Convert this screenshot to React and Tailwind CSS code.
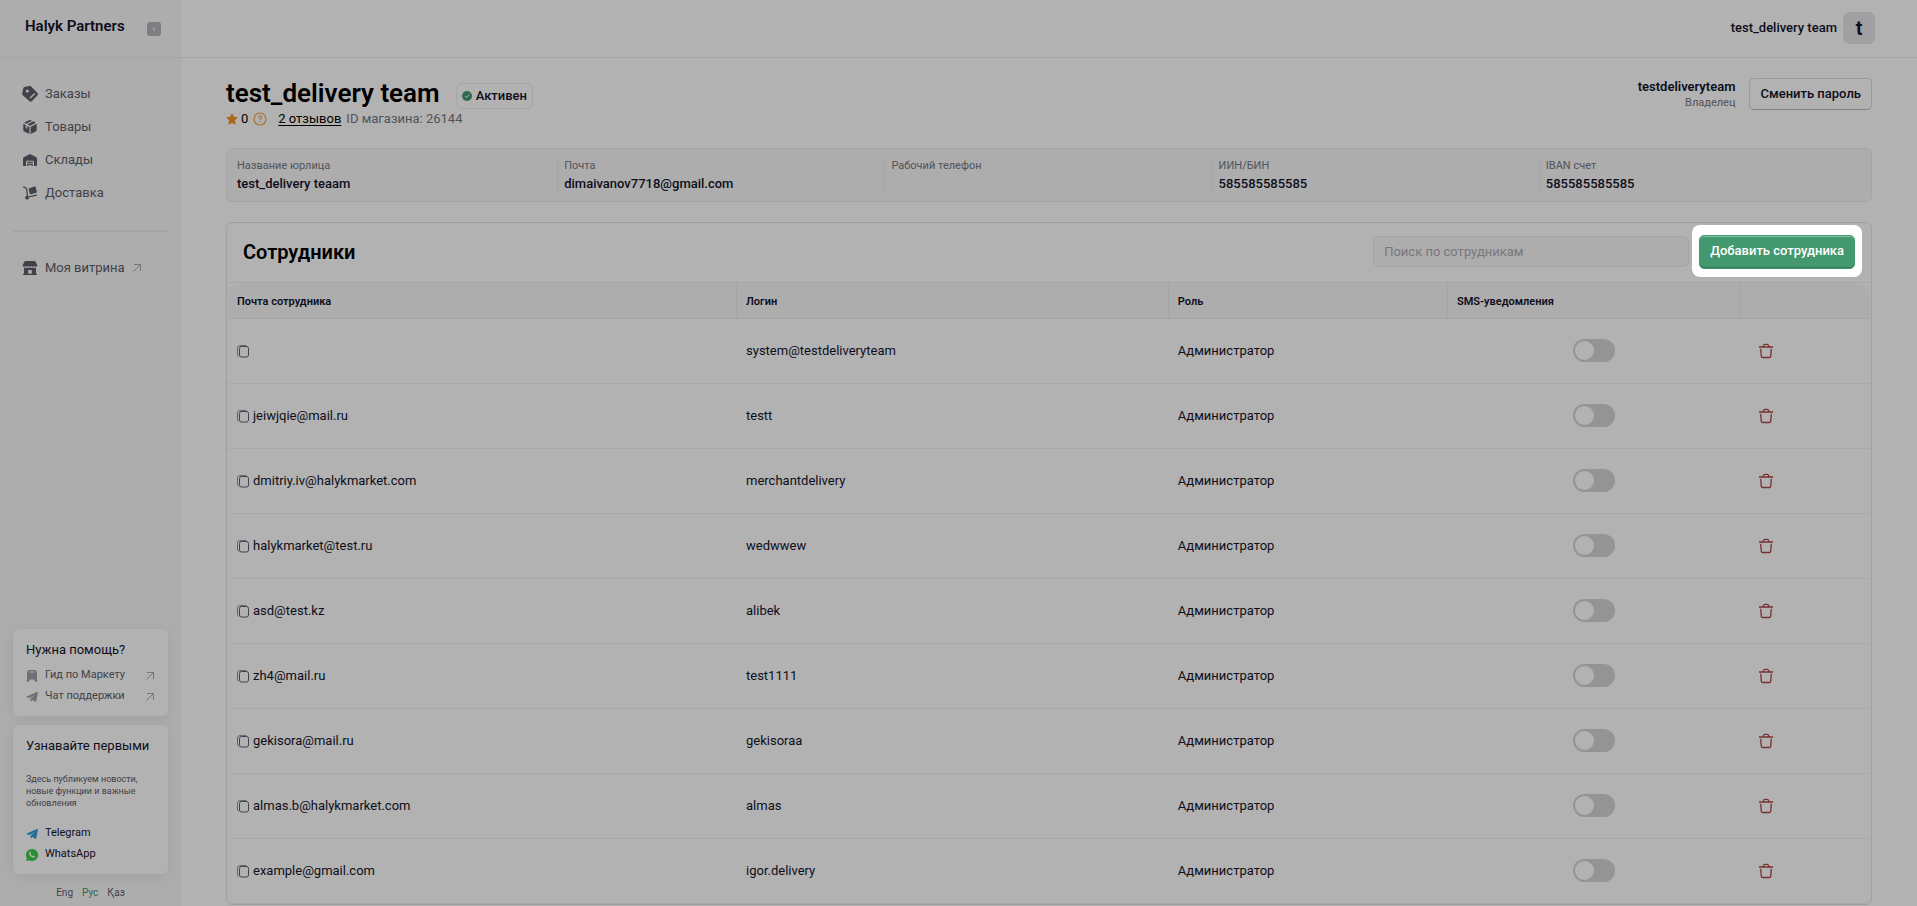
import React from "react";

const navItems = [
  { label: "Заказы", icon: TagIcon },
  { label: "Товары", icon: BoxIcon },
  { label: "Склады", icon: WarehouseIcon },
  { label: "Доставка", icon: CartIcon },
];

const details = [
  ["Название юрлица", "test_delivery teaam"],
  ["Почта", "dimaivanov7718@gmail.com"],
  ["Рабочий телефон", ""],
  ["ИИН/БИН", "585585585585"],
  ["IBAN счет", "585585585585"],
];

const employees = [
  ["", "system@testdeliveryteam"],
  ["jeiwjqie@mail.ru", "testt"],
  ["dmitriy.iv@halykmarket.com", "merchantdelivery"],
  ["halykmarket@test.ru", "wedwwew"],
  ["asd@test.kz", "alibek"],
  ["zh4@mail.ru", "test1111"],
  ["gekisora@mail.ru", "gekisoraa"],
  ["almas.b@halykmarket.com", "almas"],
  ["example@gmail.com", "igor.delivery"],
];

function TagIcon() {
  return (
    <svg viewBox="0 0 16 16" className="size-4" fill="currentColor" aria-hidden="true">
      <path fillRule="evenodd" d="M3.300.8 7.600.1c.7-.1 1.300.1 1.800.6l5.900 6c.8.8.8 2 0 2.800l-5.200 5.600c-.8.8-2 .8-2.800 0L.8 9.200C.3 8.700.1 8 .2 7.300l1-4.700C1.400 1.600 2.200.9 3.300.8ZM5.300 3.400a1.600 1.600 0 1 0 0 3.200 1.600 1.600 0 0 0 0-3.200Zm7 3.700-4.900 4.700 1 1 4.900-4.700-1-1Z" />
    </svg>
  );
}

function BoxIcon() {
  return (
    <svg viewBox="0 0 16 16" className="size-4" fill="currentColor" aria-hidden="true">
      <path d="m8 .8 2 1-5.600 3L2 3.700 8 .8ZM11.200 2.300 14 3.700 8 6.800 5.600 5.500l5.600-3.200ZM1.300 4.800 3.700 6v3l1.500.8V6.900l2.200 1.100v7L2.200 12.600a1.600 1.600 0 0 1-.9-1.500V4.800ZM8.600 8l6.100-3.200v6.300c0 .6-.3 1.200-.9 1.500L8.600 15V8Z" />
    </svg>
  );
}

function WarehouseIcon() {
  return (
    <svg viewBox="0 0 16 16" className="size-4" fill="currentColor" aria-hidden="true">
      <path fillRule="evenodd" d="M1 7.200c0-.9.400-1.700 1.200-2.100L7 2.500c.6-.3 1.400-.3 2 0l4.800 2.600c.8.400 1.200 1.200 1.200 2.100v5.800c0 .6-.4 1-1 1h-2V10c0-.8-.5-1.300-1.300-1.300H5.300C4.500 8.700 4 9.200 4 10v4H2c-.6 0-1-.4-1-1V7.200ZM5.200 9.700h5.600v1.200H5.200zM5.200 11.700h5.600V14H9.500v-1.100h-3V14H5.200Z" />
    </svg>
  );
}

function CartIcon() {
  return (
    <svg viewBox="0 0 16 16" className="size-4" fill="currentColor" aria-hidden="true">
      <path d="m7.300 3.200 5.100-1.700c.5-.2 1 .1 1.200.6l1.200 4.500c.1.500-.1 1-.6 1.200L9 9.300c-.5.100-1-.1-1.200-.6L6.600 4.300c-.1-.5.200-1 .7-1.100Z" />
      <path d="M1.500 2.200c2 0 2.800.7 3.100 2.200l.9 6.300" stroke="currentColor" strokeWidth="1.200" fill="none" strokeLinecap="round" />
      <path d="m6.500 12 8-1.900" stroke="currentColor" strokeWidth="1.200" strokeLinecap="round" />
      <circle cx="5" cy="12.700" r="1.900" />
    </svg>
  );
}

function StoreIcon() {
  return (
    <svg viewBox="0 0 16 16" className="size-4" fill="currentColor" aria-hidden="true">
      <path d="M3.600 1h8.800c.6 0 1.100.3 1.400.9L15.200 5c.3 1-.3 1.800-1.200 1.800-.8 0-1.400-.5-1.500-1-.1.500-.8 1-1.500 1s-1.400-.5-1.500-1c-.1.500-.8 1-1.500 1s-1.400-.5-1.500-1c-.1.500-.8 1-1.500 1s-1.400-.5-1.500-1c-.1.500-.7 1-1.500 1C1.100 6.800.5 6 .8 5l1.400-3.100c.3-.6.800-.9 1.400-.9Z" />
      <path fillRule="evenodd" d="M2 7.800h12v6h1V15H1v-1.200h1v-6Zm4.200 6h3.600V10H6.200v3.800Z" />
    </svg>
  );
}

function ArrowIcon({ className }) {
  return (
    <svg viewBox="0 0 10 10" className={className} fill="none" stroke="currentColor" aria-hidden="true">
      <path d="M1.500 8.500 8.500 1.500M2 1.500h6.500v6.500" />
    </svg>
  );
}

function GuideIcon() {
  return (
    <svg viewBox="0 0 12 12" className="size-3" fill="currentColor" aria-hidden="true">
      <path fillRule="evenodd" d="M3.500 0h5A2.500 2.500 0 0 1 11 2.500v9c0 .4-.4.600-.7.400L6.600 9.200a1 1 0 0 0-1.200 0L1.700 11.900c-.3.200-.7 0-.7-.4v-9A2.500 2.500 0 0 1 3.500 0Zm0 1.600v.8h5v-.8Z" />
    </svg>
  );
}

function PlaneIcon() {
  return (
    <svg viewBox="0 0 12 12" className="size-3" fill="currentColor" aria-hidden="true">
      <path d="M.7 5.400 11 1.100c.5-.2 1 .2.900.7l-1.700 8.500c-.1.600-.7.800-1.100.5L6.400 9 5.200 10.200c-.2.300-.7.100-.7-.3V7.700L8.800 4 3.700 7.100.8 6.300c-.5-.1-.5-.7-.1-.9Z" />
    </svg>
  );
}

function WhatsAppIcon() {
  return (
    <svg viewBox="0 0 12 12" className="size-3" aria-hidden="true">
      <path fill="#3dcc4d" d="M6 0a6 6 0 1 1-2.700 11.300L.2 12l.6-3A6 6 0 0 1 6 0Z" />
      <path fill="#fff" d="M4 2.900c.3-.1.500 0 .6.300l.4 1c.1.300-.5.700-.4.900.4.900 1.100 1.500 2 1.900.3.100.6-.7.900-.6l1.100.5c.3.200.3.400.2.700-.3.900-1.200 1.100-2 .9-1.700-.4-3.200-1.800-3.700-3.400-.2-.9.100-1.900.9-2.200Z" />
    </svg>
  );
}

function CopyIcon() {
  return (
    <svg viewBox="0 0 12 13" className="h-[13px] w-3" fill="none" stroke="currentColor" aria-hidden="true">
      <rect x="2.500" y="1.500" width="9" height="10.500" rx="2" />
      <path d="M9.500.6H3C1.500.6.5 1.600.5 3v6.500c0 .9.400 1.500 1.200 2" strokeOpacity="0.700" />
    </svg>
  );
}

function TrashIcon() {
  return (
    <svg viewBox="0 0 14 16" className="h-4 w-[14px]" fill="none" stroke="currentColor" strokeWidth="1.300" strokeLinejoin="round" aria-hidden="true">
      <path d="M0 4h14M4 3.800C4.300 2 4.700 1.400 5.800 1.400h2.400c1.100 0 1.500.6 1.800 2.400M1.700 5.800l.6 7.500c.1.800.5 1.200 1.300 1.200h6.800c.8 0 1.200-.4 1.300-1.200l.6-7.500" />
    </svg>
  );
}

function Sidebar() {
  return (
    <aside className="flex w-[181px] shrink-0 flex-col bg-[#f8f8f8]">
      <div className="flex h-[58px] items-center justify-between border-b border-[#ececee] pr-5 pl-[25px]">
        <a href="#home" className="pb-1 text-[15px] font-semibold text-[#14142b]">Halyk Partners</a>
        <button type="button" aria-label="Свернуть меню" className="flex size-[14px] items-center justify-center rounded-[3px] bg-[#b4b4bb] text-white">
          <svg viewBox="0 0 8 8" className="size-2" fill="none" stroke="currentColor" aria-hidden="true"><path d="M5 2 3 4l2 2" /></svg>
        </button>
      </div>
      <nav className="px-[13px] text-[13px] text-[#5d5d6b]">
        <ul className="flex flex-col gap-[13px] pt-[26px] pb-[27px]">
          {navItems.map(({ label, icon: Icon }) => (
            <li key={label}>
              <a href="#section" className="flex h-5 items-center gap-[7px] pl-[9px]"><Icon />{label}</a>
            </li>
          ))}
        </ul>
        <div className="border-t-2 border-[#ececee] pt-[26px]">
          <a href="#store" className="flex h-5 items-center gap-[7px] pl-[9px]">
            <StoreIcon />Моя витрина<ArrowIcon className="size-[10px] text-[#a6a6ad]" />
          </a>
        </div>
      </nav>
      <div className="mt-auto flex flex-col gap-[9px] px-[13px]">
        <section className="flex h-[87px] flex-col rounded-md bg-white px-[13px] pt-[11px] shadow-[0_2px_16px_rgba(0,0,0,0.08)]">
          <h2 className="text-[13px] leading-5 text-[#14142b]">Нужна помощь?</h2>
          <a href="#guide" className="mt-[5px] flex h-[21px] items-center gap-[7px] text-[11px] text-[#5d5d6b]">
            <span className="text-[#a0a0a8]"><GuideIcon /></span>Гид по Маркету<ArrowIcon className="ml-auto size-[10px] text-[#a6a6ad]" />
          </a>
          <a href="#chat" className="flex h-[21px] items-center gap-[7px] text-[11px] text-[#5d5d6b]">
            <span className="text-[#a0a0a8]"><PlaneIcon /></span>Чат поддержки<ArrowIcon className="ml-auto size-[10px] text-[#a6a6ad]" />
          </a>
        </section>
        <section className="flex h-[149px] flex-col rounded-md bg-white px-[13px] pt-[11px] shadow-[0_2px_16px_rgba(0,0,0,0.08)]">
          <h2 className="text-[13px] leading-5 whitespace-nowrap text-[#14142b]">Узнавайте первыми</h2>
          <p className="mt-[17px] text-[9px] leading-[12px] text-[#5d5d6b]">Здесь публикуем новости, новые функции и важные обновления</p>
          <a href="#telegram" className="mt-[14px] flex h-[21px] shrink-0 items-center gap-[7px] text-[11px] text-[#14142b]">
            <span className="text-[#2e9fdb]"><PlaneIcon /></span>Telegram
          </a>
          <a href="#whatsapp" className="flex h-[21px] shrink-0 items-center gap-[7px] text-[11px] text-[#14142b]"><WhatsAppIcon />WhatsApp</a>
        </section>
      </div>
      <div className="flex h-8 items-center justify-center gap-[9px] pt-[5px] text-[10px] text-[#5d5d6b]">
        <a href="#en">Eng</a>
        <a href="#ru" className="text-[#43986f]">Рус</a>
        <a href="#kz">Қаз</a>
      </div>
    </aside>
  );
}

function EmployeeTable() {
  const th = "border-r border-[#ececee] px-[9px] pt-[2px] text-left font-semibold first:rounded-tl-xl last:rounded-tr-xl last:border-r-0";
  return (
    <div className="px-px pt-px">
      <table className="w-full table-fixed border-separate border-spacing-0 text-[#14142b]">
        <colgroup>
          <col className="w-[31%]" />
          <col className="w-[26.300%]" />
          <col className="w-[17%]" />
          <col className="w-[17.800%]" />
          <col />
        </colgroup>
        <thead>
          <tr className="h-[35px] text-[11px] [&>th]:border-b [&>th]:bg-[#f8f8f8]">
            <th className={th}>Почта сотрудника</th>
            <th className={th}>Логин</th>
            <th className={th}>Роль</th>
            <th className={th}>SMS-уведомления</th>
            <th className={th} aria-label="Действия"></th>
          </tr>
        </thead>
        <tbody>
          {employees.map(([mail, login]) => (
            <tr key={login} className="h-[65px] text-[13px] [&>td]:border-b [&>td]:border-[#f3f3f5] [&>td]:px-[9px]">
              <td>
                <div className="flex items-center gap-1">
                  <button type="button" aria-label="Скопировать почту" className="text-[#5d5d6b]"><CopyIcon /></button>
                  {mail}
                </div>
              </td>
              <td>{login}</td>
              <td>Администратор</td>
              <td className="pb-px">
                <label className="relative mx-auto block h-[23px] w-[42px]">
                  <input type="checkbox" aria-label={"SMS-уведомления " + login} className="peer block h-full w-full appearance-none rounded-full bg-[#d5d5d8] checked:bg-[#43986f]" />
                  <span className="absolute top-[2px] left-[2px] size-[19px] rounded-full bg-white peer-checked:left-[21px]"></span>
                </label>
              </td>
              <td className="pb-px">
                <button type="button" aria-label={"Удалить " + login} className="ml-[10px] block text-[#ab4545]"><TrashIcon /></button>
              </td>
            </tr>
          ))}
        </tbody>
      </table>
    </div>
  );
}

export default function App() {
  return (
    <div className="flex min-h-screen bg-white font-['Roboto','Liberation_Sans',sans-serif] text-[#14142b]">
      <Sidebar />
      <div className="flex min-w-0 flex-1 flex-col">
        <header className="flex h-[58px] items-center justify-end gap-[6px] border-b border-[#ececee] pr-[42px] pb-px">
          <span className="text-[13px] font-medium">test_delivery team</span>
          <span className="flex size-8 items-center justify-center rounded-md bg-[#e5e5ea] text-xl font-semibold">t</span>
        </header>
        <main className="px-[45px]">
          <div className="flex h-[90px] justify-between pt-[19px]">
            <div>
              <div className="flex items-center gap-4">
                <h1 className="text-[26px] leading-8 font-semibold text-black">test_delivery team</h1>
                <span className="mt-[6px] flex h-[26px] items-center gap-1 rounded-md border border-[#ececee] px-[5px] text-[13px] font-medium">
                  <svg viewBox="0 0 10 10" className="size-[10px]" aria-hidden="true"><circle cx="5" cy="5" r="5" fill="#43986f" /><path d="m3 5 1.500 1.500L7.200 3.700" stroke="#fff" fill="none" /></svg>
                  Активен
                </span>
              </div>
              <div className="flex h-5 items-center text-[13px]">
                <svg viewBox="0 0 12 12" className="mr-[3px] size-3" fill="#f79420" stroke="#f79420" strokeLinejoin="round" aria-hidden="true"><path d="m6 1 1.500 3.200 3.500.4-2.500 2.600.6 3.800L6 9.400 2.900 11l.6-3.800L1 4.600l3.500-.4Z" /></svg>
                <span className="mr-[5px] text-black">0</span>
                <svg viewBox="0 0 14 14" className="mr-[11px] size-[14px]" fill="none" stroke="#f9a648" strokeWidth="1.200" aria-hidden="true"><circle cx="7" cy="7" r="6" /><path d="M5.500 5.600c.1-2 3.100-1.900 3 0C8.500 6.700 7 6.800 7 8M7 9v1.300" /></svg>
                <a href="#reviews" className="mr-[5px] text-black underline underline-offset-2">2 отзывов</a>
                <span className="text-[#77777f]">ID магазина: 26144</span>
              </div>
            </div>
            <div className="flex items-start gap-[14px]">
              <div className="pt-px text-right">
                <p className="text-[13px] leading-[18px] font-semibold">testdeliveryteam</p>
                <p className="text-[11px] leading-[14px] text-[#77777f]">Владелец</p>
              </div>
              <button type="button" className="mt-px h-8 rounded-[5px] border border-[#dcdce0] border-b-[#b9b9be] px-[10px] pb-px text-[13px] font-medium">Сменить пароль</button>
            </div>
          </div>
          <dl className="grid h-[54px] grid-cols-5 rounded-md border border-[#ececee] bg-[#f8f8f8] px-1 py-[9px]">
            {details.map(([name, value]) => (
              <div key={name} className="border-r border-[#ececee] pl-[6px] last:border-r-0">
                <dt className="text-[11px] leading-4 text-[#77777f]">{name}</dt>
                <dd className="text-[13px] leading-5 font-medium">{value}</dd>
              </div>
            ))}
          </dl>
          <section className="mt-5 rounded-md border border-[#e6e6e9]">
            <div className="flex h-[60px] items-center justify-between border-b border-[#ececee] px-4 pb-[2px]">
              <h2 className="text-xl font-semibold text-black">Сотрудники</h2>
              <div className="flex items-center gap-[10px]">
                <input type="search" aria-label="Поиск по сотрудникам" placeholder="Поиск по сотрудникам" className="h-[31px] w-[316px] rounded-md border border-[#ececee] bg-[#f8f8f8] px-[10px] text-[13px] placeholder:text-[#acacb2]" />
                <div className="relative flex">
                  <button type="button" className="h-[34px] rounded-[5px] border border-[#43986f] bg-[#43986f] px-[10px] pb-px text-[13px] font-medium text-white shadow-[inset_0_1px_0_#84c3a3,inset_0_-1px_0_#2f7a57]">Добавить сотрудника</button>
                  <div className="pointer-events-none absolute -inset-x-[7px] -top-[10px] -bottom-2 z-20 rounded-lg shadow-[0_0_0_9999px_rgba(0,0,0,0.3)]"></div>
                </div>
              </div>
            </div>
            <EmployeeTable />
          </section>
        </main>
      </div>
    </div>
  );
}
